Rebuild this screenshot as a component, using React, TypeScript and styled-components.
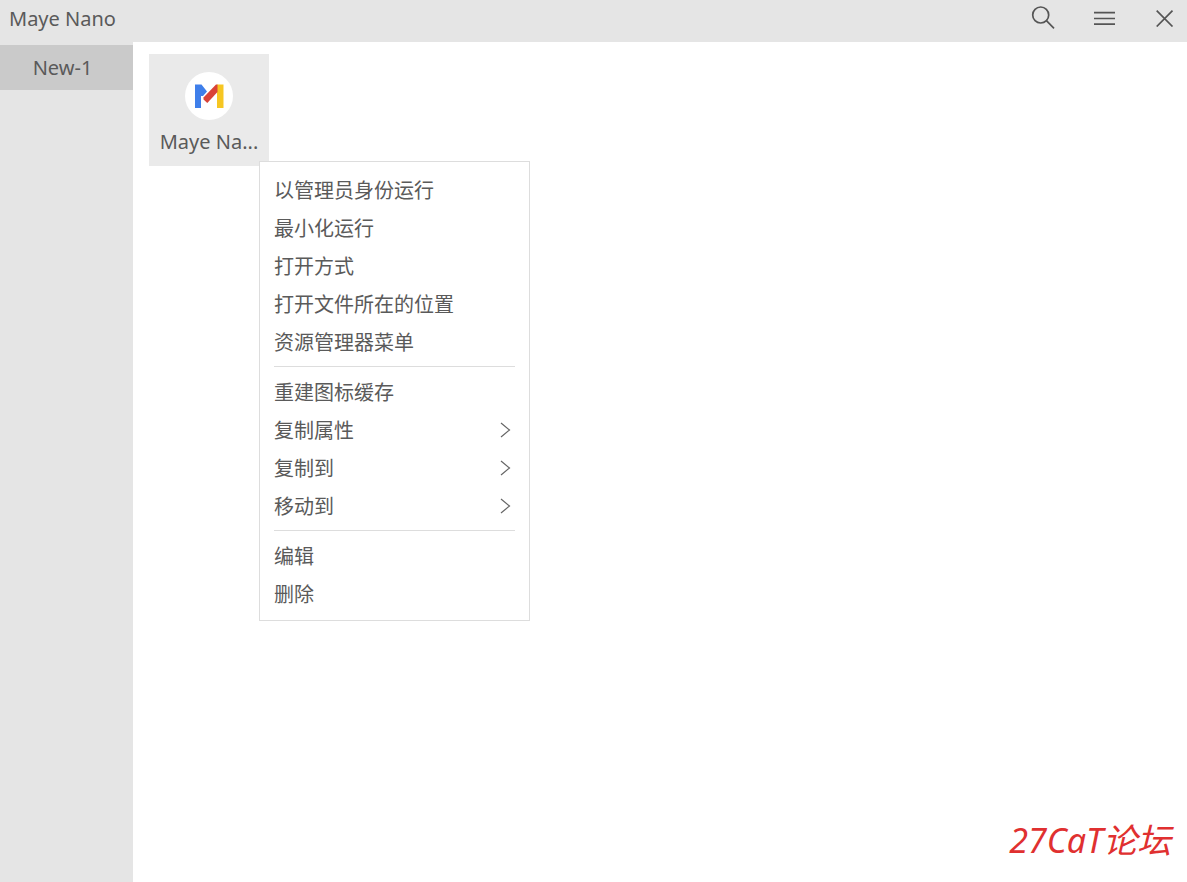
import React from "react";
import styled, { createGlobalStyle } from "styled-components";

const GlobalStyle = createGlobalStyle`
  *, *::before, *::after { box-sizing: border-box; }
  body {
    margin: 0;
    background: #ffffff;
    color: #5a5a5a;
    font-family: "Noto Sans", "Noto Sans CJK SC", sans-serif;
    font-size: 20px;
    line-height: 28px;
  }
  button { font: inherit; color: inherit; border: 0; padding: 0; background: none; }
`;

const Window = styled.div`
  min-height: 100vh;
  display: flex;
  flex-direction: column;
`;

const TitleBar = styled.header`
  display: flex;
  align-items: flex-start;
  justify-content: space-between;
  height: 42px;
  padding-left: 9px;
  background: #e5e5e5;
`;

const AppName = styled.h1`
  margin: 0;
  font-size: 20px;
  font-weight: 400;
  line-height: 38px;
`;

const Controls = styled.div`
  display: flex;
  gap: 16px;
`;

const IconButton = styled.button`
  display: grid;
  place-items: center;
  width: 45px;
  height: 36px;

  svg {
    display: block;
    fill: none;
    stroke: #555555;
    stroke-width: 1.7;
  }
`;

const Body = styled.div`
  display: flex;
  flex: 1;
`;

const Sidebar = styled.nav`
  flex: none;
  width: 133px;
  padding-top: 3px;
  background: #e5e5e5;
`;

const GroupTab = styled.button`
  display: block;
  width: 100%;
  height: 45px;
  padding-right: 8px;
  background: #cacaca;
`;

const Content = styled.main`
  display: flex;
  flex: 1;
  flex-direction: column;
  justify-content: space-between;
  min-width: 0;
  padding: 12px 16px;
`;

const Launcher = styled.div`
  position: relative;
  width: 120px;
`;

const Tile = styled.button`
  display: flex;
  flex-direction: column;
  align-items: center;
  gap: 8px;
  width: 100%;
  height: 112px;
  padding: 18px 8px 0;
  background: #eaeaea;

  svg { display: block; flex: none; }
`;

const TileLabel = styled.span`
  white-space: nowrap;
`;

const Menu = styled.div`
  position: absolute;
  top: 107px;
  left: 110px;
  width: 271px;
  padding: 9px 14px 7px;
  border: 1px solid #dddddd;
  background: #ffffff;
`;

const MenuItem = styled.button`
  display: flex;
  align-items: center;
  justify-content: space-between;
  width: 100%;
  height: 38px;
  padding-right: 4px;
  font-family: "Noto Sans CJK SC", sans-serif;
  text-align: left;

  svg { display: block; fill: none; stroke: #666666; stroke-width: 1.2; }
`;

const Separator = styled.hr`
  height: 1px;
  margin: 5px 0 6px;
  border: 0;
  background: #dddddd;
`;

const Watermark = styled.p`
  align-self: flex-end;
  margin: 0;
  color: #e03030;
  font-size: 34px;
  font-style: italic;
  line-height: 60px;
  white-space: nowrap;
`;

type Entry = { label: string; submenu?: boolean };

const menuGroups: Entry[][] = [
  [
    { label: "以管理员身份运行" },
    { label: "最小化运行" },
    { label: "打开方式" },
    { label: "打开文件所在的位置" },
    { label: "资源管理器菜单" },
  ],
  [
    { label: "重建图标缓存" },
    { label: "复制属性", submenu: true },
    { label: "复制到", submenu: true },
    { label: "移动到", submenu: true },
  ],
  [{ label: "编辑" }, { label: "删除" }],
];

const SearchIcon = () => (
  <svg width="24" height="24" viewBox="0 0 24 24" aria-hidden="true">
    <circle cx="9.7" cy="9" r="8" />
    <path d="M15.4 14.7L23 22.3" />
  </svg>
);

const MenuIcon = () => (
  <svg width="22" height="14" viewBox="0 0 22 14" aria-hidden="true">
    <path d="M1 1.7H22M1 7.5H22M1 13.1H22" />
  </svg>
);

const CloseIcon = () => (
  <svg width="18" height="18" viewBox="0 0 18 18" aria-hidden="true">
    <path d="M0.7 1.7L16.5 17.5M16.5 1.7L0.7 17.5" />
  </svg>
);

const ChevronIcon = () => (
  <svg width="11" height="16" viewBox="0 0 11 16" aria-hidden="true">
    <path d="M1 1L9.5 8L1 15" />
  </svg>
);

const Logo = () => (
  <svg width="48" height="48" viewBox="0 0 48 48" aria-hidden="true">
    <circle cx="24" cy="24" r="24" fill="#ffffff" />
    <path d="M10 12.5H16.5L22 19.5L18 24H16V36H10Z" fill="#3f7fea" />
    <path d="M32 12.5V36H38.5V12.5Z" fill="#f6c622" />
    <path d="M31 12.5H32.5V20L22.3 31L18.5 27.5V25.5Z" fill="#d94338" />
  </svg>
);

export default function App() {
  return (
    <>
      <GlobalStyle />
      <Window>
        <TitleBar>
          <AppName>Maye Nano</AppName>
          <Controls>
            <IconButton aria-label="Search"><SearchIcon /></IconButton>
            <IconButton aria-label="Menu"><MenuIcon /></IconButton>
            <IconButton aria-label="Close"><CloseIcon /></IconButton>
          </Controls>
        </TitleBar>
        <Body>
          <Sidebar>
            <GroupTab>New-1</GroupTab>
          </Sidebar>
          <Content>
            <Launcher>
              <Tile>
                <Logo />
                <TileLabel>Maye Na...</TileLabel>
              </Tile>
              <Menu role="menu">
                {menuGroups.map((group, index) => (
                  <React.Fragment key={group[0].label}>
                    {index > 0 && <Separator />}
                    {group.map((entry) => (
                      <MenuItem key={entry.label} role="menuitem" aria-haspopup={entry.submenu}>
                        {entry.label}
                        {entry.submenu && <ChevronIcon />}
                      </MenuItem>
                    ))}
                  </React.Fragment>
                ))}
              </Menu>
            </Launcher>
            <Watermark>27CaT论坛</Watermark>
          </Content>
        </Body>
      </Window>
    </>
  );
}
